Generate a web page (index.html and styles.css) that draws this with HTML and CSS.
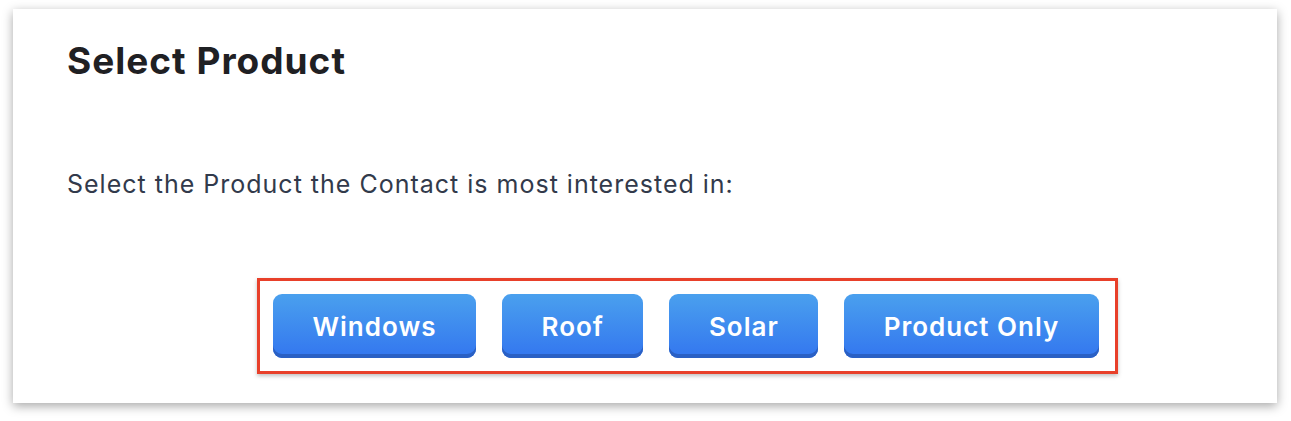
FILE: index.html
```html
<!DOCTYPE html>
<html>
<head>
<meta charset="utf-8">
<link rel="stylesheet" href="styles.css">
</head>
<body>
<div class="card">
  <h1 class="title">Select Product</h1>
  <p class="prompt">Select the Product the Contact is most interested in:</p>
  <div class="choices">
    <button class="btn">Windows</button>
    <button class="btn">Roof</button>
    <button class="btn">Solar</button>
    <button class="btn">Product Only</button>
  </div>
</div>
</body>
</html>
```
FILE: styles.css
```css
html, body {
  margin: 0;
  background: #ffffff;
}
body {
  padding: 9px 14px 18px 13px;
  font-family: "Inter", "Noto Sans", sans-serif;
}
.card {
  background: #ffffff;
  box-shadow: 0 3px 10px rgba(0, 0, 0, 0.35);
  height: 394px;
  box-sizing: border-box;
  padding: 30px 0 0 54px;
}
.title {
  margin: 0;
  font-size: 37px;
  line-height: 44px;
  font-weight: 700;
  color: #1f2023;
  letter-spacing: 1px;
}
.prompt {
  margin: 86px 0 0 0;
  font-size: 25px;
  line-height: 30px;
  color: #323a4b;
  letter-spacing: 1px;
}
.choices {
  display: inline-flex;
  gap: 26px;
  margin: 79px 0 0 190px;
  padding: 13px 16px 13px 13px;
  border: 3px solid #e8402a;
  box-shadow: 0 2px 4px rgba(0, 0, 0, 0.25);
}
.btn {
  font-family: "Inter", "Noto Sans", sans-serif;
  font-size: 26px;
  font-weight: 600;
  letter-spacing: 1px;
  color: #ffffff;
  height: 64px;
  padding: 0 39.5px;
  border: none;
  border-radius: 9px;
  background: linear-gradient(#4aa0ee, #3376ef);
  box-shadow: inset 0 -4px 0 #2a60c4;
  cursor: pointer;
}
```
